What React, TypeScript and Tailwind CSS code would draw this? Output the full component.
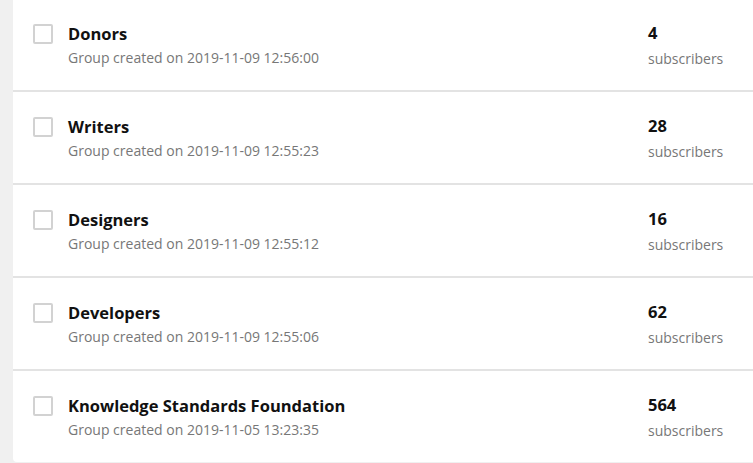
const groups = [
  { name: 'Donors', created: '2019-11-09 12:56:00', subs: 4 },
  { name: 'Writers', created: '2019-11-09 12:55:23', subs: 28 },
  { name: 'Designers', created: '2019-11-09 12:55:12', subs: 16 },
  { name: 'Developers', created: '2019-11-09 12:55:06', subs: 62 },
  { name: 'Knowledge Standards Foundation', created: '2019-11-05 13:23:35', subs: 564 },
];

export default function App() {
  return (
    <div className="h-[463px] overflow-hidden bg-[#f0f0f0] pl-[13px] font-['Open_Sans',sans-serif]">
      <div className="-mt-px bg-white rounded-bl-[4px]">
        {groups.map((g, i) => (
          <div
            key={g.name}
            className={`flex items-start pt-[25px] ${i < groups.length - 1 ? 'h-[93px] border-b-2 border-[#e3e3e3]' : 'h-[91px]'}`}
          >
            <div className="ml-[20px] h-[20px] w-[20px] rounded-[2px] border-2 border-[#d2d2d2]" />
            <div className="ml-[15px] flex-1">
              <div className="text-[16.5px] font-bold leading-[20px] text-[#111]">{g.name}</div>
              <div className="mt-[4px] text-[14px] leading-[20px] text-[#777]">Group created on {g.created}</div>
            </div>
            <div className="w-[105px]">
              <div className="-mt-px text-[16.5px] font-bold leading-[20px] text-[#111]">{g.subs}</div>
              <div className="mt-[6px] text-[14px] leading-[20px] text-[#777]">subscribers</div>
            </div>
          </div>
        ))}
      </div>
    </div>
  );
}
